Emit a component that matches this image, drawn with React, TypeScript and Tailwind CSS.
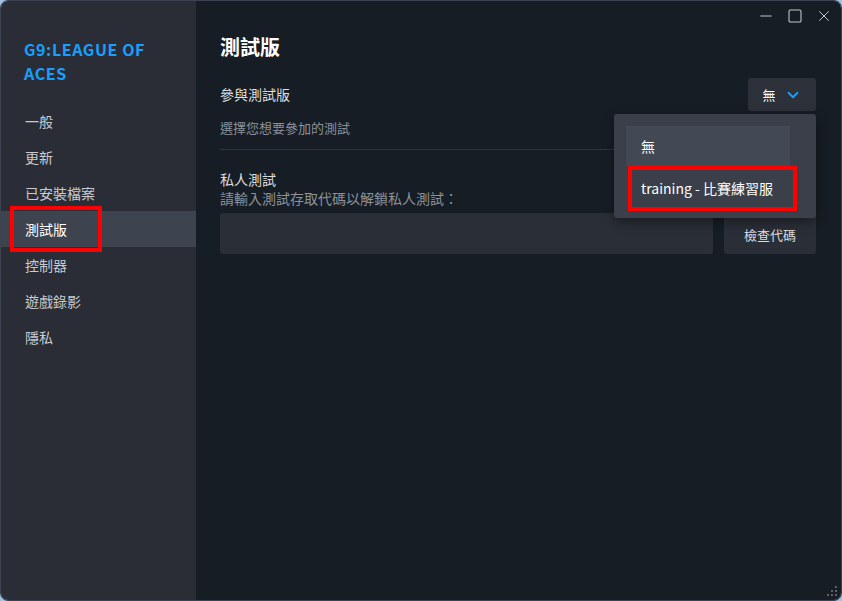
import { ChevronDown, Minus, Square, X } from 'lucide-react'

const NAV = ['一般', '更新', '已安裝檔案', '測試版', '控制器', '遊戲錄影', '隱私']
const ACTIVE = '測試版'

const font = { fontFamily: '"Noto Sans CJK TC", "Noto Sans", Arial, sans-serif' }

function Sidebar() {
  return (
    <aside className="w-[195px] shrink-0 bg-[#2a2d35] flex flex-col">
      <h1 className="px-[23px] pt-[36px] pb-[18px] text-[#1a9fff] font-bold text-[16px] leading-[24px] tracking-[0.6px]">
        G9:LEAGUE OF
        <br />
        ACES
      </h1>
      <nav className="flex flex-col">
        {NAV.map((label) => {
          const active = label === ACTIVE
          return (
            <div
              key={label}
              className={`relative h-[36px] flex items-center pl-[24px] text-[14px] ${
                active ? 'bg-[#3d4450] text-white' : 'text-[#c8cbd0]'
              }`}
            >
              {label}
              {active && (
                <span className="absolute left-[9px] top-[-5px] w-[92px] h-[46px] border-[4px] border-[#ff0000]" />
              )}
            </div>
          )
        })}
      </nav>
    </aside>
  )
}

function WindowControls() {
  return (
    <div className="absolute top-[6px] right-[8px] flex items-center gap-[12px] text-[#c6c9ce]">
      <Minus size={18} strokeWidth={1.3} />
      <Square size={16} strokeWidth={1.6} />
      <X size={18} strokeWidth={1.3} />
    </div>
  )
}

function BetaMenu() {
  return (
    <div className="absolute left-[418px] top-[113px] w-[202px] h-[104px] bg-[#3a3f49] rounded-[3px] shadow-[0_4px_12px_rgba(0,0,0,0.4)] pt-[12px] pl-[12px]">
      <div className="w-[164px] h-[40px] bg-[#434954] flex items-center pl-[15px] text-[14px] text-white">無</div>
      <div className="relative w-[170px] h-[44px] flex items-center pl-[15px] text-[14px] text-white">
        training - 比賽練習服
        <span className="absolute left-[2px] top-0 w-[169px] h-[45px] border-[4px] border-[#ff0000]" />
      </div>
    </div>
  )
}

export default function App() {
  return (
    <div className="w-[842px] h-[601px] bg-[#9fc3df]" style={font}>
      <div className="relative w-full h-full flex rounded-[8px] overflow-hidden border border-[#3c4250]">
        <Sidebar />
        <main className="relative flex-1 bg-[#171d25] pl-[24px] pr-[25px]">
          <WindowControls />
          <h2 className="pt-[31px] text-white font-bold text-[20px] leading-[30px]">測試版</h2>

          <div className="mt-[16px] flex items-center justify-between">
            <span className="text-[14px] text-[#dcdedf]">參與測試版</span>
            <button className="w-[68px] h-[33px] bg-[#2d313a] rounded-[3px] flex items-center justify-center gap-[8px] text-white text-[13px]">
              無
              <ChevronDown size={18} strokeWidth={2.4} className="text-[#1a9fff]" />
            </button>
          </div>
          <p className="mt-[7px] text-[13px] text-[#8b929a] leading-[20px]">選擇您想要參加的測試</p>
          <div className="mt-[11px] h-px bg-[#2f353e]" />

          <div className="mt-[20px] text-[14px] text-[#dcdedf] leading-[18px]">私人測試</div>
          <div className="text-[14px] text-[#8b929a] leading-[20px]">請輸入測試存取代碼以解鎖私人測試：</div>
          <div className="mt-[5px] flex gap-[11px]">
            <div className="flex-1 h-[41px] bg-[#2a2e37] rounded-[3px]" />
            <button className="w-[92px] h-[41px] bg-[#2a2e37] rounded-[3px] text-[13px] text-[#dcdedf] pt-[3px]">
              檢查代碼
            </button>
          </div>

          <BetaMenu />

          {/* resize grip */}
          <div className="absolute right-[4px] bottom-[4px] grid grid-cols-3 gap-[2px]">
            {[0, 0, 1, 0, 1, 1, 1, 1, 1].map((on, i) => (
              <span key={i} className={`w-[2px] h-[2px] ${on ? 'bg-[#5c626c]' : ''}`} />
            ))}
          </div>
        </main>
      </div>
    </div>
  )
}
